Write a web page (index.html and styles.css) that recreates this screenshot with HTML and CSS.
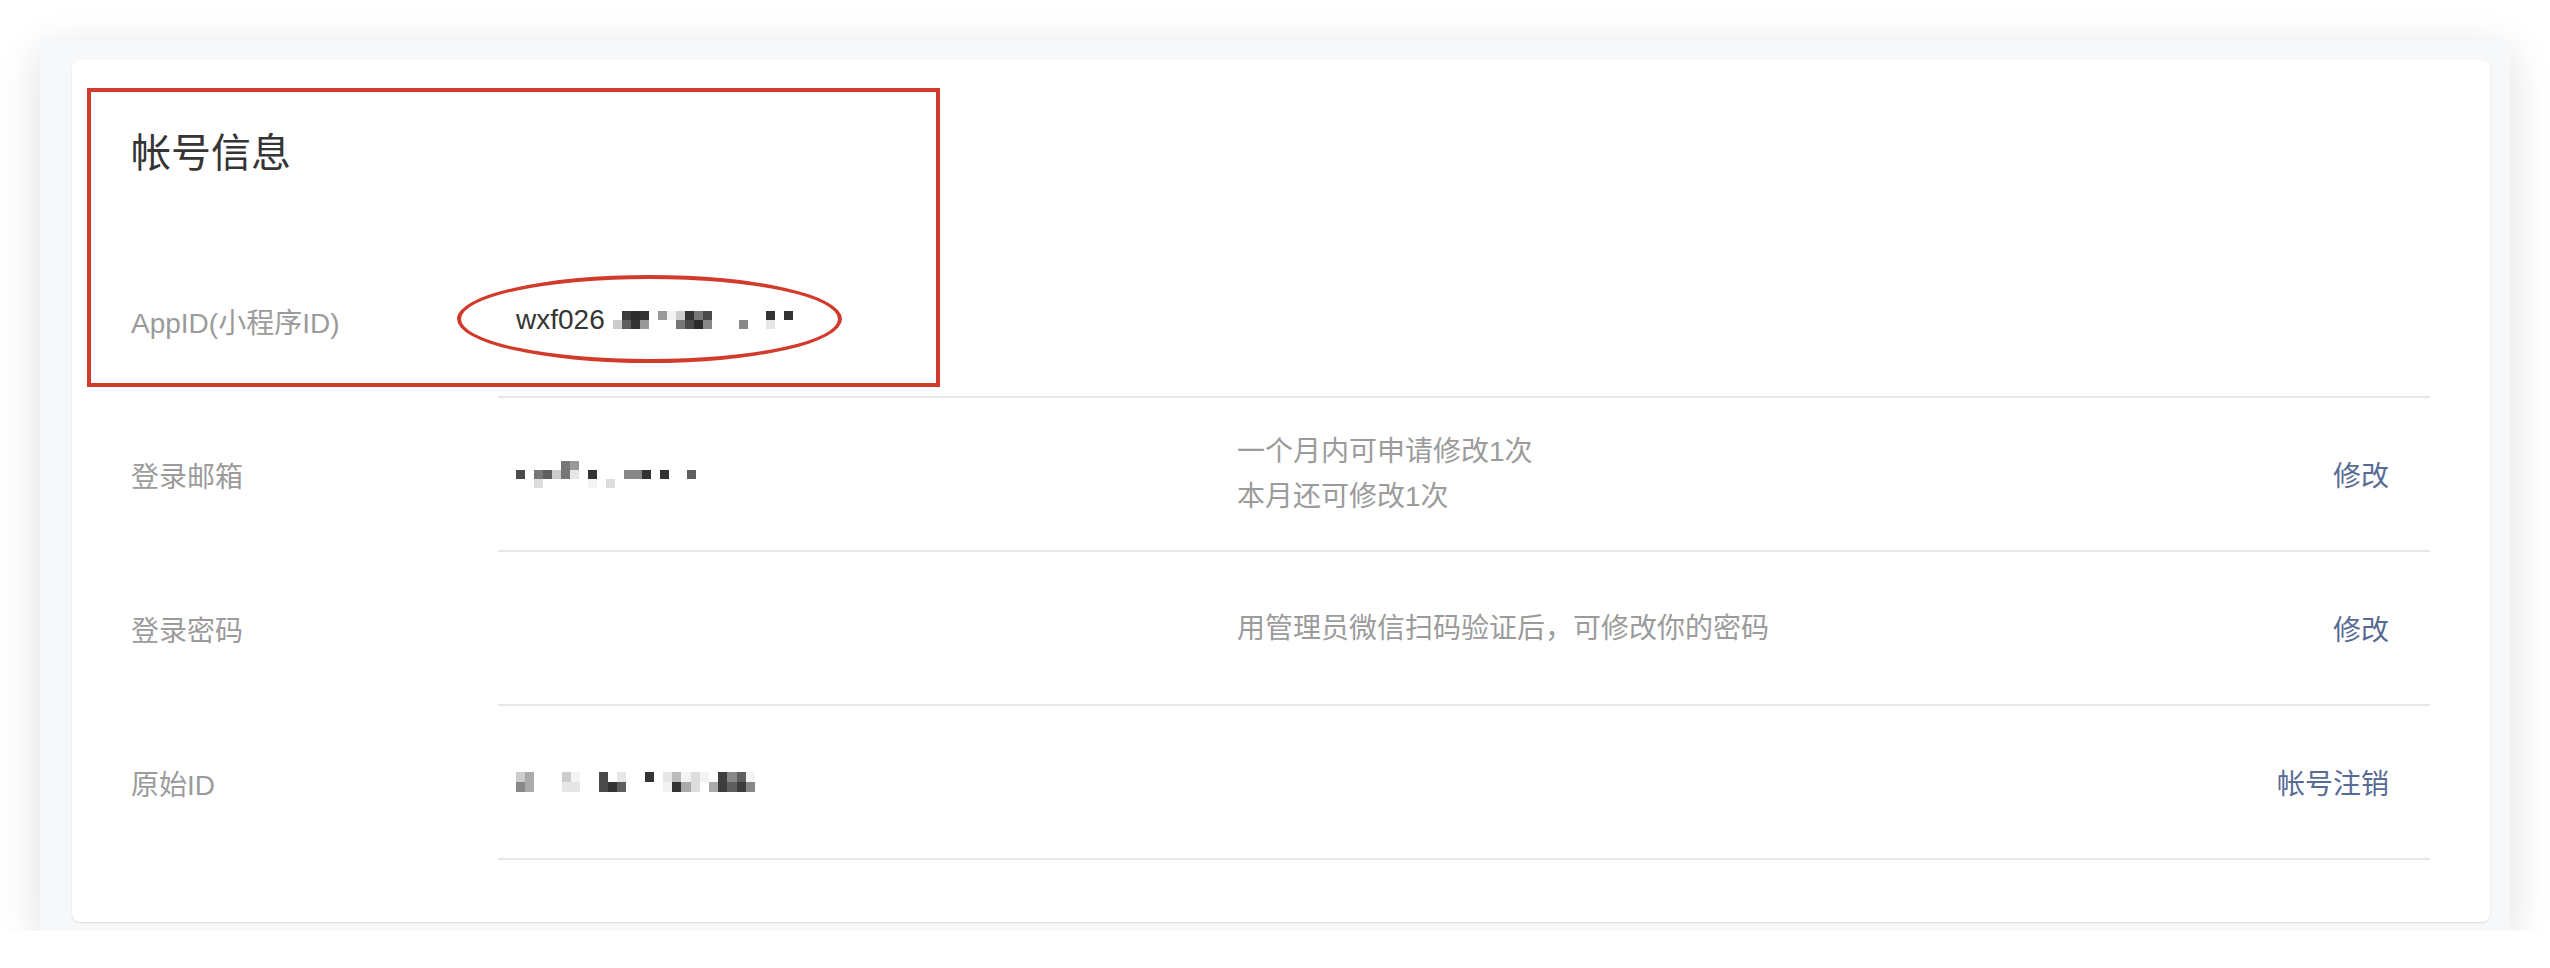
FILE: index.html
```html
<!DOCTYPE html>
<html lang="zh-CN">
<head>
    <meta charset="UTF-8">
    <title>帐号信息</title>
    <link rel="stylesheet" href="styles.css">
</head>
<body>

    <div class="frame">
        <div class="card">
            <h1>帐号信息</h1>

            <div class="row">
                <div class="row-label">AppID(小程序ID)</div>
                <div class="row-body">
                    <div class="value">wxf026<span class="mosaic two">
                        <i class="e"></i><i class="l1"></i>
                        <i class="d3"></i><i class="d5"></i>
                        <i class="d1"></i><i class="d2"></i>
                        <i class="d2"></i><i class="g3"></i>
                        <i class="e"></i><i class="e"></i>
                        <i class="g3"></i><i class="e"></i>
                        <i class="l4"></i><i class="e"></i>
                        <i class="l1"></i><i class="g1"></i>
                        <i class="d2"></i><i class="d4"></i>
                        <i class="g1"></i><i class="d1"></i>
                        <i class="d4"></i><i class="g2"></i>
                        <i class="e"></i><i class="e"></i>
                        <i class="e"></i><i class="e"></i>
                        <i class="e"></i><i class="e"></i>
                        <i class="e"></i><i class="g2"></i>
                        <i class="e"></i><i class="e"></i>
                        <i class="e"></i><i class="e"></i>
                        <i class="d2"></i><i class="l3"></i>
                        <i class="e"></i><i class="e"></i>
                        <i class="d2"></i><i class="e"></i>
                    </span></div>
                </div>
            </div>

            <div class="row">
                <div class="row-label">登录邮箱</div>
                <div class="row-body">
                    <div class="value"><span class="mosaic three">
                        <i class="e"></i><i class="d4"></i><i class="e"></i>
                        <i class="e"></i><i class="e"></i><i class="e"></i>
                        <i class="e"></i><i class="g1"></i><i class="l2"></i>
                        <i class="e"></i><i class="d5"></i><i class="e"></i>
                        <i class="e"></i><i class="l1"></i><i class="e"></i>
                        <i class="g1"></i><i class="g1"></i><i class="e"></i>
                        <i class="g3"></i><i class="l3"></i><i class="e"></i>
                        <i class="e"></i><i class="e"></i><i class="e"></i>
                        <i class="e"></i><i class="d2"></i><i class="l4"></i>
                        <i class="e"></i><i class="e"></i><i class="e"></i>
                        <i class="e"></i><i class="e"></i><i class="l2"></i>
                        <i class="e"></i><i class="e"></i><i class="e"></i>
                        <i class="e"></i><i class="g2"></i><i class="e"></i>
                        <i class="e"></i><i class="g2"></i><i class="e"></i>
                        <i class="e"></i><i class="d2"></i><i class="e"></i>
                        <i class="e"></i><i class="e"></i><i class="e"></i>
                        <i class="e"></i><i class="d2"></i><i class="e"></i>
                        <i class="e"></i><i class="e"></i><i class="e"></i>
                        <i class="e"></i><i class="e"></i><i class="e"></i>
                        <i class="e"></i><i class="d5"></i><i class="e"></i>
                    </span></div>
                    <div class="desc">
                        <p>一个月内可申请修改1次</p>
                        <p>本月还可修改1次</p>
                    </div>
                    <a class="action" href="#">修改</a>
                </div>
            </div>

            <div class="row">
                <div class="row-label">登录密码</div>
                <div class="row-body">
                    <div class="value"></div>
                    <div class="desc">
                        <p>用管理员微信扫码验证后，可修改你的密码</p>
                    </div>
                    <a class="action" href="#">修改</a>
                </div>
            </div>

            <div class="row">
                <div class="row-label">原始ID</div>
                <div class="row-body">
                    <div class="value"><span class="mosaic two tall">
                        <i class="l1"></i><i class="g2"></i>
                        <i class="g4"></i><i class="g4"></i>
                        <i class="e"></i><i class="e"></i>
                        <i class="e"></i><i class="e"></i>
                        <i class="e"></i><i class="e"></i>
                        <i class="l1"></i><i class="l3"></i>
                        <i class="l4"></i><i class="l3"></i>
                        <i class="e"></i><i class="e"></i>
                        <i class="e"></i><i class="e"></i>
                        <i class="d4"></i><i class="d4"></i>
                        <i class="e"></i><i class="d2"></i>
                        <i class="l3"></i><i class="d5"></i>
                        <i class="e"></i><i class="e"></i>
                        <i class="e"></i><i class="e"></i>
                        <i class="d2"></i><i class="e"></i>
                        <i class="e"></i><i class="e"></i>
                        <i class="l3"></i><i class="l4"></i>
                        <i class="g5"></i><i class="d2"></i>
                        <i class="l4"></i><i class="g4"></i>
                        <i class="l2"></i><i class="l2"></i>
                        <i class="l4"></i><i class="e"></i>
                        <i class="e"></i><i class="g4"></i>
                        <i class="d3"></i><i class="d3"></i>
                        <i class="g2"></i><i class="d5"></i>
                        <i class="d5"></i><i class="d3"></i>
                        <i class="l4"></i><i class="g2"></i>
                    </span></div>
                    <div class="desc"></div>
                    <a class="action" href="#">帐号注销</a>
                </div>
            </div>
        </div>
    </div>

    <!-- Markierungen über dem Screenshot -->
    <div class="mark-box"></div>
    <div class="mark-ellipse"></div>

</body>
</html>
```

FILE: styles.css
```css
body {
    margin: 0;
    padding: 40px 40px 0;
    background-color: #fff;
    font-family: 'Liberation Sans', 'Noto Sans CJK SC', sans-serif;
    color: #353535;
}

.frame {
    background-color: #f7f8fa;
    padding: 20px 20px 9px 32px;
    box-shadow: 0 10px 40px rgba(0, 0, 0, 0.13);
}

.card {
    background-color: #fff;
    border-radius: 8px;
    box-shadow: 0 1px 2px rgba(0, 0, 0, 0.12);
    padding: 63px 60px 62px 59px;
}

h1 {
    margin: 0 0 61px;
    font-size: 40px;
    line-height: 60px;
    font-weight: normal;
    color: #353535;
}

.row {
    display: flex;
    font-size: 28px;
}

.row-label {
    width: 367px;
    flex-shrink: 0;
    display: flex;
    align-items: center;
    color: #9b9b9b;
}

.row-body {
    flex: 1;
    display: flex;
    align-items: center;
    height: 152px;
    padding: 0 41px 0 18px;
    border-bottom: 2px solid #e7e7eb;
}

.value {
    width: 721px;
    flex-shrink: 0;
    color: #353535;
    display: flex;
    align-items: center;
}

.desc {
    flex: 1;
    color: #9b9b9b;
}

.desc p {
    margin: 0;
    line-height: 45px;
}

.action {
    color: #576b95;
    text-decoration: none;
}

/* verpixelte Stellen */
.mosaic {
    display: inline-grid;
    grid-auto-flow: column;
    grid-auto-columns: 9px;
    grid-template-rows: repeat(2, 9px);
    margin-left: 8px;
}

.mosaic.three {
    grid-template-rows: repeat(3, 9px);
    margin-left: 0;
}

.mosaic.tall {
    grid-template-rows: repeat(2, 10px);
    grid-auto-columns: 9.2px;
    margin-left: 0;
}

.mosaic i { display: block; }
.mosaic .e { background: transparent; }
.mosaic .d1 { background: #2b2b2b; }
.mosaic .d2 { background: #333; }
.mosaic .d3 { background: #3d3d3d; }
.mosaic .d4 { background: #4a4a4a; }
.mosaic .d5 { background: #5e5e5e; }
.mosaic .g1 { background: #777; }
.mosaic .g2 { background: #888; }
.mosaic .g3 { background: #999; }
.mosaic .g4 { background: #aaa; }
.mosaic .g5 { background: #bbb; }
.mosaic .l1 { background: #ccc; }
.mosaic .l2 { background: #ddd; }
.mosaic .l3 { background: #e6e6e6; }
.mosaic .l4 { background: #f3f3f3; }

.mark-box {
    position: absolute;
    left: 87px;
    top: 88px;
    width: 845px;
    height: 291px;
    border: 4px solid #d23b2b;
}

.mark-ellipse {
    position: absolute;
    left: 457px;
    top: 275px;
    width: 377px;
    height: 80px;
    border: 4px solid #d23b2b;
    border-radius: 50%;
}
```
